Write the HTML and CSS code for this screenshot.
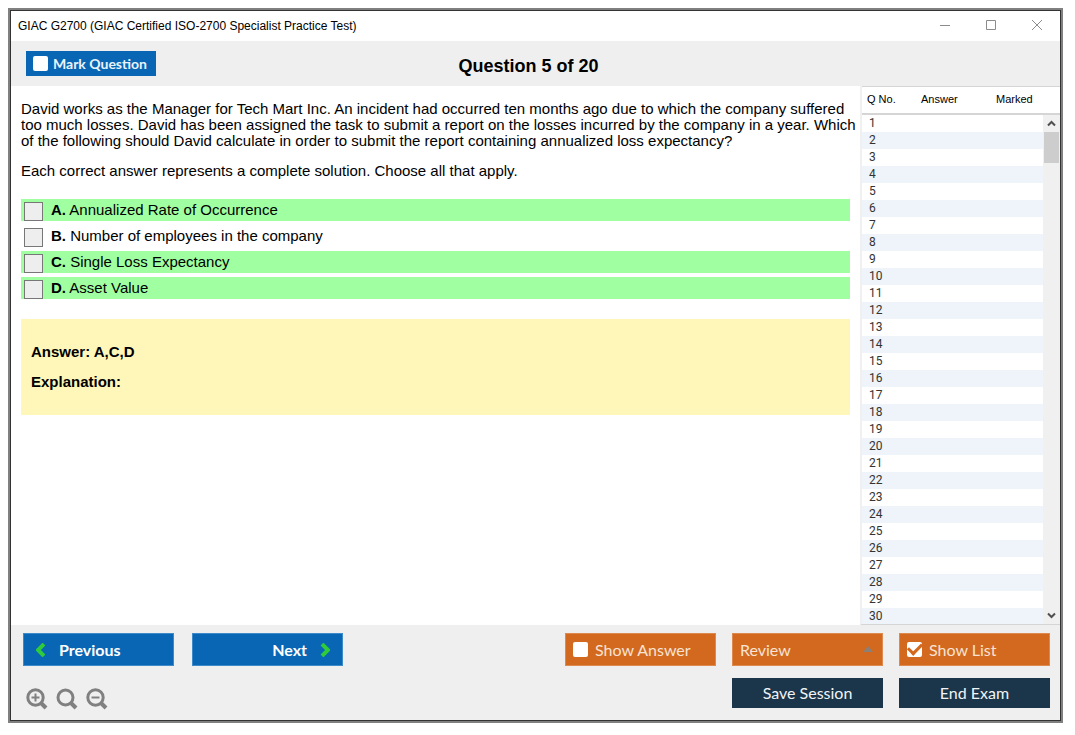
FILE: index.html
```html
<!DOCTYPE html>
<html lang="en">
<head>
    <meta charset="UTF-8">
    <meta name="viewport" content="width=device-width, initial-scale=1.0">
    <title>GIAC G2700 Practice Test</title>
    <link rel="stylesheet" href="styles.css">
</head>
<body>
    <div class="exam-window">
        <div class="titlebar">
            <span>GIAC G2700 (GIAC Certified ISO-2700 Specialist Practice Test)</span>
            <div class="window-controls">
                <button class="window-button" aria-label="Minimize">
                    <svg width="12" height="12" viewBox="0 0 12 12"><path d="M1 5.5h10"/></svg>
                </button>
                <button class="window-button" aria-label="Maximize">
                    <svg width="12" height="12" viewBox="0 0 12 12"><path d="M1.5 0.5h9v9h-9z"/></svg>
                </button>
                <button class="window-button" aria-label="Close">
                    <svg width="12" height="12" viewBox="0 0 12 12"><path d="M1 0l10 10M11 0L1 10"/></svg>
                </button>
            </div>
        </div>

        <header class="header">
            <label class="mark-question"><input type="checkbox" class="tick">Mark Question</label>
            <h1 class="counter">Question 5 of 20</h1>
        </header>

        <div class="content">
            <main class="question">
                <p>David works as the Manager for Tech Mart Inc. An incident had occurred ten months ago due to which the company suffered too much losses. David has been assigned the task to submit a report on the losses incurred by the company in a year. Which of the following should David calculate in order to submit the report containing annualized loss expectancy?</p>
                <p>Each correct answer represents a complete solution. Choose all that apply.</p>

                <div class="options">
                    <label class="option correct"><input type="checkbox" class="option-box"><span><b>A.</b> Annualized Rate of Occurrence</span></label>
                    <label class="option"><input type="checkbox" class="option-box"><span><b>B.</b> Number of employees in the company</span></label>
                    <label class="option correct"><input type="checkbox" class="option-box"><span><b>C.</b> Single Loss Expectancy</span></label>
                    <label class="option correct"><input type="checkbox" class="option-box"><span><b>D.</b> Asset Value</span></label>
                </div>

                <div class="answer">
                    <p>Answer: A,C,D</p>
                    <p>Explanation:</p>
                </div>
            </main>

            <aside class="list">
                <div class="list-rows">
                    <table class="list-table">
                        <thead>
                            <tr><th class="col-number">Q No.</th><th class="col-answer">Answer</th><th>Marked</th></tr>
                        </thead>
                        <tbody>
                            <tr><td>1</td><td></td><td></td></tr>
                            <tr><td>2</td><td></td><td></td></tr>
                            <tr><td>3</td><td></td><td></td></tr>
                            <tr><td>4</td><td></td><td></td></tr>
                            <tr><td>5</td><td></td><td></td></tr>
                            <tr><td>6</td><td></td><td></td></tr>
                            <tr><td>7</td><td></td><td></td></tr>
                            <tr><td>8</td><td></td><td></td></tr>
                            <tr><td>9</td><td></td><td></td></tr>
                            <tr><td>10</td><td></td><td></td></tr>
                            <tr><td>11</td><td></td><td></td></tr>
                            <tr><td>12</td><td></td><td></td></tr>
                            <tr><td>13</td><td></td><td></td></tr>
                            <tr><td>14</td><td></td><td></td></tr>
                            <tr><td>15</td><td></td><td></td></tr>
                            <tr><td>16</td><td></td><td></td></tr>
                            <tr><td>17</td><td></td><td></td></tr>
                            <tr><td>18</td><td></td><td></td></tr>
                            <tr><td>19</td><td></td><td></td></tr>
                            <tr><td>20</td><td></td><td></td></tr>
                            <tr><td>21</td><td></td><td></td></tr>
                            <tr><td>22</td><td></td><td></td></tr>
                            <tr><td>23</td><td></td><td></td></tr>
                            <tr><td>24</td><td></td><td></td></tr>
                            <tr><td>25</td><td></td><td></td></tr>
                            <tr><td>26</td><td></td><td></td></tr>
                            <tr><td>27</td><td></td><td></td></tr>
                            <tr><td>28</td><td></td><td></td></tr>
                            <tr><td>29</td><td></td><td></td></tr>
                            <tr><td>30</td><td></td><td></td></tr>
                        </tbody>
                    </table>
                </div>
                <div class="scroll-side">
                    <div class="scroll-head"></div>
                    <div class="scrollbar">
                        <button class="scroll-button" aria-label="Scroll up">
                            <svg width="9" height="7" viewBox="0 0 9 7"><path d="M1 5.5L4.5 2 8 5.5"/></svg>
                        </button>
                        <div class="scroll-thumb"></div>
                        <button class="scroll-button scroll-down" aria-label="Scroll down">
                            <svg width="9" height="7" viewBox="0 0 9 7"><path d="M1 1.5L4.5 5 8 1.5"/></svg>
                        </button>
                    </div>
                </div>
            </aside>
        </div>

        <footer class="footer">
            <div class="nav">
                <div class="nav-buttons">
                    <button class="nav-button">
                        <svg width="10" height="14" viewBox="0 0 10 14"><path d="M8 1L2 7l6 6"/></svg>
                        Previous
                    </button>
                    <button class="nav-button next">
                        Next
                        <svg width="10" height="14" viewBox="0 0 10 14"><path d="M2 1l6 6-6 6"/></svg>
                    </button>
                </div>
                <div class="zoom">
                    <button class="zoom-button" aria-label="Zoom in">
                        <svg width="22" height="22" viewBox="0 0 22 22"><circle cx="9.5" cy="9.5" r="7.7"/><path class="handle" d="M15 15L20 20"/><path class="sign" d="M5.5 9.5h8M9.5 5.5v8"/></svg>
                    </button>
                    <button class="zoom-button" aria-label="Reset zoom">
                        <svg width="22" height="22" viewBox="0 0 22 22"><circle cx="9.5" cy="9.5" r="7.5"/><path class="handle" d="M15 15L20 20"/></svg>
                    </button>
                    <button class="zoom-button" aria-label="Zoom out">
                        <svg width="22" height="22" viewBox="0 0 22 22"><circle cx="9.5" cy="9.5" r="7.7"/><path class="handle" d="M15 15L20 20"/><path class="sign" d="M5.5 9.5h8"/></svg>
                    </button>
                </div>
            </div>
            <div class="actions">
                <label class="action orange"><input type="checkbox" class="tick">Show Answer</label>
                <div class="review">
                    <select class="action orange" aria-label="Review">
                        <option>Review</option>
                    </select>
                    <svg class="review-arrow" width="10" height="6" viewBox="0 0 10 6"><path d="M0 6l5-6 5 6z"/></svg>
                </div>
                <label class="action orange"><input type="checkbox" class="tick" checked>Show List</label>
                <button class="action navy save">Save Session</button>
                <button class="action navy">End Exam</button>
            </div>
        </footer>
    </div>
</body>
</html>
```
FILE: styles.css
```css
* {
    margin: 0;
    padding: 0;
    box-sizing: border-box;
}

body {
    height: 100vh;
    padding: 8px 12px 12px 8px;
    background-color: white;
    color: black;
    font-family: "Liberation Sans", Arial, sans-serif;
    font-size: 15px;
    line-height: 16px;
}

button,
select {
    border: none;
    background: none;
    font: inherit;
    cursor: pointer;
}

svg {
    display: block;
    fill: none;
}

.exam-window {
    height: 100%;
    display: flex;
    flex-direction: column;
    padding: 1px;
    background-color: #EFEFEF;
    border: 2px solid #808080;
    outline: 1px solid #333;
    outline-offset: -3px;
}

/* Title bar */
.titlebar {
    height: 30px;
    flex: none;
    display: flex;
    align-items: center;
    justify-content: space-between;
    padding: 0 17px 0 7px;
    background-color: white;
    font-size: 12px;
}

.window-controls {
    display: flex;
    gap: 34px;
}

.window-button svg {
    stroke: #8C8C8C;
}

/* Header */
.header {
    height: 45px;
    flex: none;
    display: grid;
    grid-template-columns: 1fr auto 1fr;
    align-items: center;
    padding: 0 29px 0 15px;
}

.mark-question {
    justify-self: start;
    width: 130px;
    height: 25px;
    display: flex;
    align-items: center;
    gap: 5px;
    padding-left: 7px;
    background-color: #0866B4;
    color: #EAF3FA;
    font-family: Lato, sans-serif;
    font-size: 14px;
    font-weight: bold;
    white-space: nowrap;
}

.counter {
    padding-top: 4px;
    font-size: 18px;
    line-height: 24px;
}

.tick {
    appearance: none;
    width: 15px;
    height: 15px;
    flex: none;
    display: grid;
    place-items: center;
    background-color: white;
    border-radius: 2px;
}

.tick:checked::before {
    content: "";
    width: 11px;
    height: 6px;
    margin-bottom: 4px;
    border-left: 3px solid #D2691E;
    border-bottom: 3px solid #D2691E;
    transform: rotate(-45deg);
}

/* Question */
.content {
    flex: 1;
    min-height: 0;
    display: flex;
    background-color: white;
}

.question {
    flex: 1;
    padding: 15px 2px 15px 10px;
    overflow: hidden;
}

.question p + p {
    margin-top: 14px;
}

.options {
    display: flex;
    flex-direction: column;
    gap: 4px;
    margin: 20px 8px 20px 0;
}

.option {
    height: 22px;
    display: flex;
    align-items: center;
    gap: 8px;
    padding-left: 3px;
}

.correct {
    background-color: #A0FFA0;
}

.option-box {
    appearance: none;
    align-self: flex-end;
    width: 19px;
    height: 19px;
    background-color: #EEE;
    border: 1px solid #777;
}

.answer {
    margin-right: 8px;
    padding: 25px 10px;
    background-color: #FFF7B9;
    font-weight: bold;
}

/* Question list */
.list {
    width: 200px;
    flex: none;
    display: flex;
    border-left: 2px solid #F0F0F0;
    border-bottom: 1px solid #D5D5D5;
    overflow: hidden;
}

.list-rows {
    flex: 1;
    overflow: hidden;
}

.list-table {
    width: 100%;
    table-layout: fixed;
    border-collapse: separate;
    border-spacing: 0;
    font-family: Roboto, sans-serif;
    font-size: 12px;
}

.list-table th {
    height: 29px;
    padding: 0 0 2px 5px;
    border-top: 1px solid #D5D5D5;
    border-bottom: 2px solid #D5D5D5;
    font-family: "Liberation Sans", Arial, sans-serif;
    font-size: 11px;
    font-weight: normal;
    text-align: left;
}

.list-table .col-number {
    width: 54px;
}

.list-table .col-answer {
    width: 75px;
}

.list-table td {
    height: 17px;
    padding-left: 7px;
    color: #333;
    line-height: 17px;
}

.list-table tbody tr:nth-child(even) {
    background-color: #EEF4F9;
}

.scroll-side {
    width: 17px;
    display: flex;
    flex-direction: column;
}

.scroll-head {
    height: 29px;
    flex: none;
    border-top: 1px solid #D5D5D5;
    border-bottom: 2px solid #D5D5D5;
}

.scrollbar {
    flex: 1;
    display: flex;
    flex-direction: column;
    background-color: #F0F0F0;
}

.scroll-button {
    height: 17px;
    display: grid;
    place-items: center;
}

.scroll-button svg {
    stroke: #505050;
    stroke-width: 2;
}

.scroll-thumb {
    height: 31px;
    margin: 0 1px;
    background-color: #CDCDCD;
}

.scroll-down {
    margin-top: auto;
}

/* Footer */
.footer {
    height: 95px;
    flex: none;
    display: flex;
    justify-content: space-between;
    padding: 8px 10px 10px 12px;
    font-family: Lato, sans-serif;
    font-size: 16px;
}

.nav {
    display: flex;
    flex-direction: column;
    gap: 22px;
}

.nav-buttons {
    display: flex;
    gap: 18px;
}

.nav-button {
    width: 151px;
    height: 33px;
    display: flex;
    align-items: center;
    gap: 13px;
    padding: 0 12px;
    background-color: #0866B4;
    border: 1px solid #3D8ACB;
    color: white;
    font-weight: bold;
}

.nav-button svg {
    stroke: #2FCB3B;
    stroke-width: 4;
}

.next {
    justify-content: flex-end;
}

.zoom {
    display: flex;
    gap: 8px;
    padding-left: 3px;
}

.zoom-button svg {
    stroke: #808080;
    stroke-width: 3;
}

.zoom-button .sign {
    stroke-width: 2;
}

.zoom-button .handle {
    stroke-width: 4;
}

.actions {
    display: grid;
    grid-template-columns: repeat(3, 151px);
    grid-template-rows: 33px 30px;
    gap: 12px 16px;
}

.action {
    width: 100%;
    height: 100%;
    display: flex;
    align-items: center;
    gap: 7px;
    padding: 0 7px;
}

.orange {
    background-color: #D2691E;
    border: 1px solid #DE8A4E;
    color: #F7E3D4;
}

.navy {
    justify-content: center;
    background-color: #1B354A;
    color: #F0F4F7;
}

.review {
    position: relative;
}

.review .action {
    appearance: none;
}

.review-arrow {
    position: absolute;
    right: 10px;
    top: 13px;
    pointer-events: none;
}

.review-arrow path {
    fill: #8A8078;
}

.save {
    grid-column: 2;
}
```
